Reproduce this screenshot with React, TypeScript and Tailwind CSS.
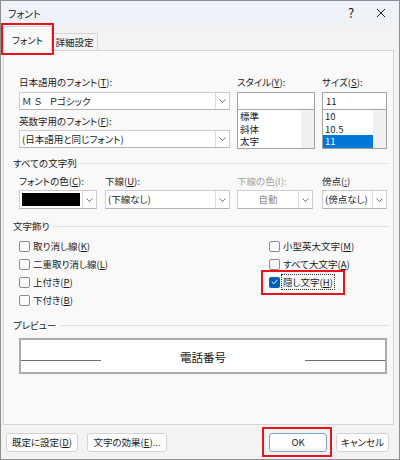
import React from "react";

const font = {
  fontFamily: '"Noto Sans CJK JP", "Noto Sans", sans-serif',
  fontFeatureSettings: '"palt"',
};

function Chevron({ className = "" }: { className?: string }) {
  return (
    <svg width="7" height="4" viewBox="0 0 7 4" className={className}>
      <polyline points="0.5,0.5 3.5,3.5 6.5,0.5" fill="none" stroke="#6d6d6d" strokeWidth="1" />
    </svg>
  );
}

function Key({ k }: { k: string }) {
  return (
    <>
      (<span className="underline">{k}</span>)
    </>
  );
}

function Combo({
  w,
  h = 18,
  children,
  disabled = false,
}: {
  w: string;
  h?: number;
  children?: React.ReactNode;
  disabled?: boolean;
}) {
  return (
    <div
      className={`${w} flex border border-[#cdcdcd] border-b-[#b5b5b5] bg-white`}
      style={{ height: h }}
    >
      <div className={`flex-1 flex items-center px-[2px] ${disabled ? "text-[#8a8a8a] justify-center" : ""}`}>
        {children}
      </div>
      <div className="w-[14px] flex items-center justify-center border-l border-[#dcdcdc] bg-white">
        <Chevron />
      </div>
    </div>
  );
}

function Check({ label, k, checked = false }: { label: string; k: string; checked?: boolean }) {
  return (
    <div className="h-[18px] flex items-center gap-[2px]">
      {checked ? (
        <div className="w-[11px] h-[11px] rounded-[2px] bg-[#005fb8] flex items-center justify-center">
          <svg width="7" height="6" viewBox="0 0 7 6">
            <polyline points="0.8,3 2.7,4.8 6.2,1" fill="none" stroke="white" strokeWidth="1" />
          </svg>
        </div>
      ) : (
        <div className="w-[11px] h-[11px] rounded-[2px] border border-[#8c8c8c] bg-[#fbfbfb]" />
      )}
      <span className={`px-[1px] leading-[12px] ${checked ? "outline outline-1 outline-dotted outline-[#333] py-[1px]" : ""}`}>
        {label}
        <Key k={k} />
      </span>
    </div>
  );
}

function Section({ title }: { title: string }) {
  return (
    <div className="flex items-center gap-[4px] h-[12px] leading-[12px]">
      <span>{title}</span>
      <div className="flex-1 h-px bg-[#e0e0e0]" />
    </div>
  );
}

function Button({ children, w, primary = false }: { children: React.ReactNode; w: string; primary?: boolean }) {
  return (
    <div
      className={`${w} h-[19px] flex items-center justify-center rounded-[3px] border bg-[#fdfdfd] ${
        primary ? "border-[#7aa6d6]" : "border-[#d3d3d3]"
      }`}
    >
      {children}
    </div>
  );
}

export default function App() {
  return (
    <div
      className="w-[400px] h-[460px] border border-[#8e8e8e] bg-[#f3f3f3] text-[#1b1b1b] text-[9.5px] flex flex-col overflow-hidden"
      style={font}
    >
      {/* title bar */}
      <div className="h-[24px] flex items-center bg-[#eff3f9] pl-[7px]">
        <span className="text-[10px] flex-1">フォント</span>
        <span className="text-[13px] w-[20px] text-center mr-[15px]">?</span>
        <svg width="10" height="10" viewBox="0 0 10 10" className="mr-[13px]">
          <path d="M1 1L9 9M9 1L1 9" stroke="#1b1b1b" strokeWidth="1" />
        </svg>
      </div>

      {/* tabs */}
      <div className="h-[25px] flex items-end pl-[2px]">
        <div className="relative z-10 -mb-px w-[49px] h-[25px] border border-b-0 border-[#d5d5d5] bg-[#f9f9f9] flex items-center justify-center pt-[2px]">
          フォント
          <div className="absolute -left-[3px] -top-[4px] w-[53px] h-[32px] border-2 border-[#e8131b]" />
        </div>
        <div className="w-[46px] h-[17px] border border-l-0 border-b-0 border-[#d5d5d5] bg-[#f3f3f3] flex items-center justify-center">
          詳細設定
        </div>
      </div>

      {/* panel */}
      <div className="ml-[2px] w-[391px] h-[375px] border border-[#d5d5d5] bg-[#f9f9f9] pl-[9px] pr-[4px] pt-[25px]">
        {/* row 1 */}
        <div className="ml-[6px] flex gap-[7px]">
          <div className="w-[211px] flex flex-col">
            <div className="h-[12px] leading-[12px]">
              日本語用のフォント<Key k="T" />:
            </div>
            <div className="mt-[4px]">
              <Combo w="w-[211px]">
                <span className="tracking-[3px]">ＭＳ</span>
                <span className="ml-[5px]">Ｐゴシック</span>
              </Combo>
            </div>
            <div className="mt-[5px] h-[12px] leading-[12px]">
              英数字用のフォント<Key k="F" />:
            </div>
            <div className="mt-[3px]">
              <Combo w="w-[211px]">(日本語用と同じフォント)</Combo>
            </div>
          </div>
          <div className="w-[78px] flex flex-col">
            <div className="h-[12px] leading-[12px]">
              スタイル<Key k="Y" />:
            </div>
            <div className="mt-[4px] h-[18px] border border-[#a3a3a3] bg-white" />
            <div className="h-[39px] border border-t-0 border-[#a3a3a3] bg-white flex">
              <div className="flex-1 flex flex-col pl-[2px] leading-[12.5px]">
                <span>標準</span>
                <span>斜体</span>
                <span>太字</span>
              </div>
              <div className="w-[13px] bg-[#f0f0f0]" />
            </div>
          </div>
          <div className="w-[65px] flex flex-col">
            <div className="h-[12px] leading-[12px]">
              サイズ<Key k="S" />:
            </div>
            <div className="mt-[4px] h-[18px] border border-[#a3a3a3] bg-white flex items-center pl-[3px]">11</div>
            <div className="h-[39px] border border-t-0 border-[#a3a3a3] bg-white flex">
              <div className="flex-1 flex flex-col leading-[12.5px]">
                <span className="pl-[2px]">10</span>
                <span className="pl-[2px]">10.5</span>
                <span className="pl-[2px] bg-[#0078d7] text-white">11</span>
              </div>
              <div className="w-[13px] bg-[#f0f0f0]" />
            </div>
          </div>
        </div>

        {/* all text */}
        <div className="mt-[8px]">
          <Section title="すべての文字列" />
        </div>
        <div className="ml-[6px] mt-[6px] flex">
          <div className="w-[78px]">
            <div className="h-[12px] leading-[12px]">
              フォントの色<Key k="C" />:
            </div>
            <div className="mt-[3px] w-[78px] h-[19px] flex border border-[#cdcdcd] border-b-[#b5b5b5] bg-white">
              <div className="flex-1 p-[2px]">
                <div className="w-full h-full bg-black" />
              </div>
              <div className="w-[14px] flex items-center justify-center border-l border-[#dcdcdc]">
                <Chevron />
              </div>
            </div>
          </div>
          <div className="ml-[8px] w-[125px]">
            <div className="h-[12px] leading-[12px]">
              下線<Key k="U" />:
            </div>
            <div className="mt-[3px]">
              <Combo w="w-[125px]" h={19}>(下線なし)</Combo>
            </div>
          </div>
          <div className="ml-[7px] w-[76px]">
            <div className="h-[12px] leading-[12px] text-[#a2a2a2]">
              下線の色(I):
            </div>
            <div className="mt-[3px]">
              <Combo w="w-[76px]" h={19} disabled>
                自動
              </Combo>
            </div>
          </div>
          <div className="ml-[9px] w-[65px]">
            <div className="h-[12px] leading-[12px]">
              傍点<Key k=":" />
            </div>
            <div className="mt-[3px]">
              <Combo w="w-[65px]" h={19}>(傍点なし)</Combo>
            </div>
          </div>
        </div>

        {/* decorations */}
        <div className="mt-[11px]">
          <Section title="文字飾り" />
        </div>
        <div className="ml-[6px] mt-[5px] flex">
          <div className="w-[250px] flex flex-col">
            <Check label="取り消し線" k="K" />
            <Check label="二重取り消し線" k="L" />
            <Check label="上付き" k="P" />
            <Check label="下付き" k="B" />
          </div>
          <div className="flex flex-col relative">
            <Check label="小型英大文字" k="M" />
            <Check label="すべて大文字" k="A" />
            <Check label="隠し文字" k="H" checked />
            <div className="absolute -left-[8px] top-[33px] w-[84px] h-[25px] border-2 border-[#e8131b]" />
          </div>
        </div>

        {/* preview */}
        <div className="mt-[10px]">
          <Section title="プレビュー" />
        </div>
        <div className="ml-[6px] mt-[7px] w-[368px] h-[36px] border-2 border-[#acacac] bg-white flex items-start">
          <div className="w-[80px] h-px bg-[#6f6f6f] mt-[20px]" />
          <div className="flex-1 text-center text-[11.5px] leading-[14px] pt-[10px]">電話番号</div>
          <div className="w-[80px] h-px bg-[#6f6f6f] mt-[20px]" />
        </div>
      </div>

      {/* buttons */}
      <div className="mt-[8px] flex items-center pl-[5px] pr-[10px]">
        <Button w="w-[72px]">
          既定に設定<Key k="D" />
        </Button>
        <div className="ml-[9px]">
          <Button w="w-[80px]">
            文字の効果<Key k="E" />...
          </Button>
        </div>
        <div className="flex-1" />
        <div className="relative">
          <Button w="w-[58px]" primary>
            OK
          </Button>
          <div className="absolute -left-[7px] -top-[6px] w-[70px] h-[30px] border-2 border-[#e8131b]" />
        </div>
        <div className="ml-[9px]">
          <Button w="w-[53px]">キャンセル</Button>
        </div>
      </div>
    </div>
  );
}
